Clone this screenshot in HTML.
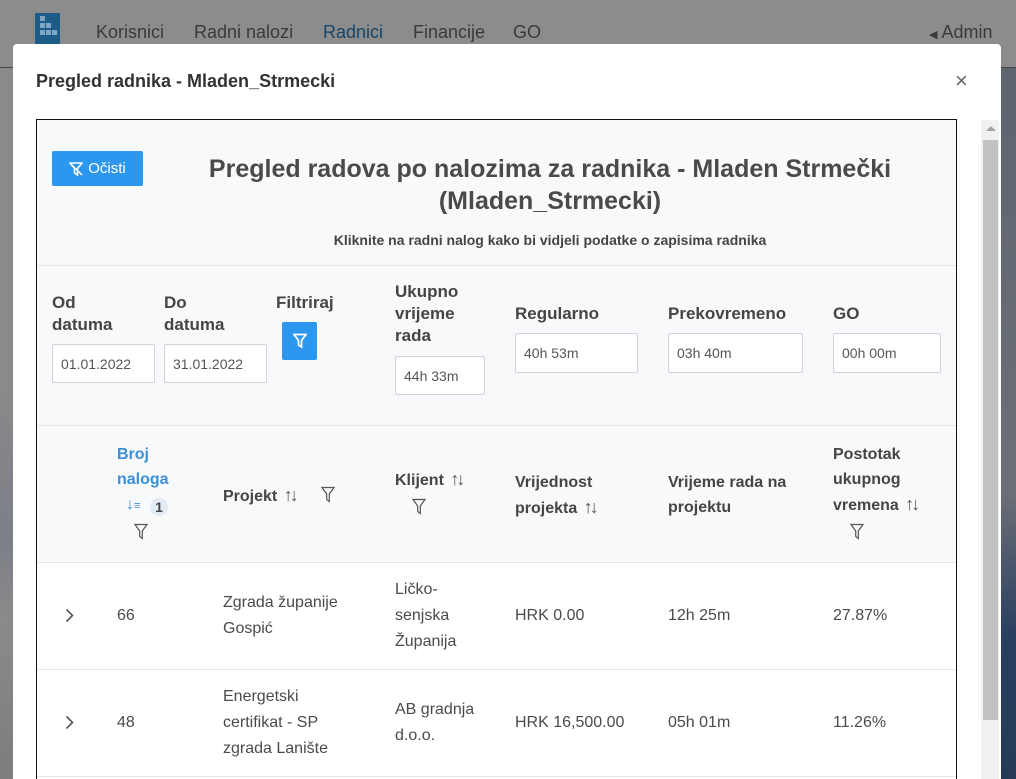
<!DOCTYPE html>
<html style="overflow:hidden;height:779px"><head><meta charset="utf-8">
<style>
*{margin:0;padding:0;box-sizing:border-box}
body{width:1016px;height:779px;overflow:hidden;background:#8a8a8a;font-family:"Liberation Sans",sans-serif;position:relative;color:#444}
.a{position:absolute;white-space:nowrap}
.nav{font-size:18px;color:#3a3a3a;top:22px}
.lb{font-size:17px;font-weight:bold;color:#454545;line-height:22px}
.th{font-size:16px;font-weight:bold;color:#454545;line-height:25px}
.td{font-size:16px;color:#4a4a4a;line-height:26px}
.inp{position:absolute;background:#fff;border:1px solid #ced4da;border-radius:2px;font-size:14px;color:#555;padding-left:8px;display:flex;align-items:center}
.hl{position:absolute;left:37px;width:919px;height:1px;background:#e4e6e8}
.srt{font-weight:normal;color:#555;font-size:18px;letter-spacing:-3px}
</style></head><body>
<div class="a" style="left:0;top:0;width:1016px;height:67px;background:#8c8c8c"></div>
<div class="a" style="left:0;top:67px;width:1016px;height:1px;background:#444"></div>
<div class="a" style="left:0;top:380px;width:13px;height:399px;background:linear-gradient(#8a8a8a,#7c7f88 40%,#8a8a8a 60%,#7d7d7d)"></div>
<div class="a" style="left:1001px;top:68px;width:15px;height:711px;background:linear-gradient(#5e6570,#676c74 40%,#6b6f76 60%,#2a3e60 80%,#263a58)"></div>
<div class="a" style="left:35px;top:13px;width:25px;height:31px;background:#1d5c88"></div>
<div class="a" style="left:40px;top:16px;width:5px;height:5px;background:#7ea6c3"></div>
<div class="a" style="left:40px;top:23px;width:11px;height:5px;background:repeating-linear-gradient(90deg,#7ea6c3 0 5px,transparent 5px 6px)"></div>
<div class="a" style="left:40px;top:30px;width:17px;height:5px;background:repeating-linear-gradient(90deg,#7ea6c3 0 5px,transparent 5px 6px)"></div>
<div class="a nav" style="left:96px">Korisnici</div>
<div class="a nav" style="left:194px">Radni nalozi</div>
<div class="a nav" style="left:323px;color:#17466a">Radnici</div>
<div class="a nav" style="left:413px">Financije</div>
<div class="a nav" style="left:513px">GO</div>
<div class="a nav" style="left:929px"><span style="font-size:11px">◀</span> Admin</div>
<div class="a" style="left:13px;top:44px;width:988px;height:735px;background:#fff;border-radius:4px 4px 0 0"></div>
<div class="a" style="left:36px;top:71px;font-size:18px;font-weight:bold;color:#333">Pregled radnika - Mladen_Strmecki</div>
<div class="a" style="left:955px;top:68px;font-size:22px;color:#666">×</div>
<div class="a" style="left:981px;top:120px;width:18px;height:659px;background:#f1f1f1"></div>
<div class="a" style="left:983px;top:140px;width:15px;height:580px;background:#c1c1c1"></div>
<div class="a" style="left:986px;top:126px;width:0;height:0;border-left:5px solid transparent;border-right:5px solid transparent;border-bottom:5px solid #a3a3a3"></div>
<div class="a" style="left:36px;top:119px;width:921px;height:660px;border:1px solid #111;border-bottom:none;background:#fff"></div>
<div class="a" style="left:37px;top:120px;width:919px;height:442px;background:#f8f9fa"></div>
<div class="hl" style="top:265px"></div>
<div class="hl" style="top:425px"></div>
<div class="hl" style="top:562px"></div>
<div class="hl" style="top:669px"></div>
<div class="hl" style="top:776px"></div>
<div class="a" style="left:52px;top:151px;width:91px;height:35px;background:#2c97ee;border-radius:2px;color:#fff;font-size:15px;display:flex;align-items:center;justify-content:center;gap:5px">
<svg width="14" height="14" viewBox="0 0 14 14"><path d="M1 1h12L8.5 6.5V13L5.5 11V6.5Z" fill="none" stroke="#fff" stroke-width="1.6"/><path d="M1 1l12 12" stroke="#fff" stroke-width="1.4"/></svg>Očisti</div>
<div class="a" style="left:160px;top:153px;width:780px;text-align:center;font-size:25px;font-weight:bold;color:#4a4a4a;line-height:32px;white-space:normal">Pregled radova po nalozima za radnika - Mladen Strmečki<br>(Mladen_Strmecki)</div>
<div class="a" style="left:160px;top:232px;width:780px;text-align:center;font-size:14px;font-weight:bold;color:#444">Kliknite na radni nalog kako bi vidjeli podatke o zapisima radnika</div>
<div class="a lb" style="left:52px;top:292px">Od<br>datuma</div>
<div class="a lb" style="left:164px;top:292px">Do<br>datuma</div>
<div class="a lb" style="left:276px;top:292px">Filtriraj</div>
<div class="a lb" style="left:395px;top:281px">Ukupno<br>vrijeme<br>rada</div>
<div class="a lb" style="left:515px;top:303px">Regularno</div>
<div class="a lb" style="left:668px;top:303px">Prekovremeno</div>
<div class="a lb" style="left:833px;top:303px">GO</div>
<div class="inp" style="left:52px;top:344px;width:103px;height:39px">01.01.2022</div>
<div class="inp" style="left:164px;top:344px;width:103px;height:39px">31.01.2022</div>
<div class="a" style="left:282px;top:322px;width:35px;height:38px;background:#2c97ee;border-radius:2px;display:flex;align-items:center;justify-content:center">
<svg width="14" height="16" viewBox="0 0 14 16"><path d="M1 1.5h12L8.5 7.5V14L5.5 12V7.5Z" fill="none" stroke="#fff" stroke-width="1.8"/></svg></div>
<div class="inp" style="left:395px;top:356px;width:90px;height:39px">44h 33m</div>
<div class="inp" style="left:515px;top:333px;width:123px;height:40px">40h 53m</div>
<div class="inp" style="left:668px;top:333px;width:135px;height:40px">03h 40m</div>
<div class="inp" style="left:833px;top:333px;width:108px;height:40px">00h 00m</div>
<div class="a th" style="left:117px;top:442px;color:#3a8fd8">Broj<br>naloga</div>
<div class="a" style="left:126px;top:496px;font-size:16px;color:#3a8fd8">↓<span style="font-size:11px">≡</span></div>
<div class="a" style="left:150px;top:498px;width:18px;height:18px;border-radius:9px;background:#e3ecf5;font-size:14px;font-weight:bold;text-align:center;line-height:18px;color:#444">1</div>
<svg class="a" style="left:134px;top:523px" width="14" height="17" viewBox="0 0 14 17"><path d="M1 1.5h12L8.3 8V15.5L5.7 13.5V8Z" fill="none" stroke="#555" stroke-width="1.2"/></svg>
<div class="a th" style="left:223px;top:483px">Projekt <span class="srt">&nbsp;↑↓</span></div>
<svg class="a" style="left:321px;top:486px" width="14" height="17" viewBox="0 0 14 17"><path d="M1 1.5h12L8.3 8V15.5L5.7 13.5V8Z" fill="none" stroke="#555" stroke-width="1.2"/></svg>
<div class="a th" style="left:395px;top:467px">Klijent <span class="srt">&nbsp;↑↓</span></div>
<svg class="a" style="left:412px;top:498px" width="14" height="17" viewBox="0 0 14 17"><path d="M1 1.5h12L8.3 8V15.5L5.7 13.5V8Z" fill="none" stroke="#555" stroke-width="1.2"/></svg>
<div class="a th" style="left:515px;top:470px">Vrijednost<br>projekta <span class="srt">&nbsp;↑↓</span></div>
<div class="a th" style="left:668px;top:470px">Vrijeme rada na<br>projektu</div>
<div class="a th" style="left:833px;top:442px">Postotak<br>ukupnog<br>vremena <span class="srt">&nbsp;↑↓</span></div>
<svg class="a" style="left:850px;top:523px" width="14" height="17" viewBox="0 0 14 17"><path d="M1 1.5h12L8.3 8V15.5L5.7 13.5V8Z" fill="none" stroke="#555" stroke-width="1.2"/></svg>
<svg class="a" style="left:65px;top:608px" width="9" height="15" viewBox="0 0 9 15"><path d="M1.5 1.5l6 6-6 6" fill="none" stroke="#555" stroke-width="1.6"/></svg>
<div class="a td" style="left:117px;top:603px">66</div>
<div class="a td" style="left:223px;top:590px">Zgrada županije<br>Gospić</div>
<div class="a td" style="left:395px;top:577px">Ličko-<br>senjska<br>Županija</div>
<div class="a td" style="left:515px;top:603px">HRK 0.00</div>
<div class="a td" style="left:668px;top:603px">12h 25m</div>
<div class="a td" style="left:833px;top:603px">27.87%</div>
<svg class="a" style="left:65px;top:715px" width="9" height="15" viewBox="0 0 9 15"><path d="M1.5 1.5l6 6-6 6" fill="none" stroke="#555" stroke-width="1.6"/></svg>
<div class="a td" style="left:117px;top:710px">48</div>
<div class="a td" style="left:223px;top:684px">Energetski<br>certifikat - SP<br>zgrada Lanište</div>
<div class="a td" style="left:395px;top:697px">AB gradnja<br>d.o.o.</div>
<div class="a td" style="left:515px;top:710px">HRK 16,500.00</div>
<div class="a td" style="left:668px;top:710px">05h 01m</div>
<div class="a td" style="left:833px;top:710px">11.26%</div>
</body></html>
